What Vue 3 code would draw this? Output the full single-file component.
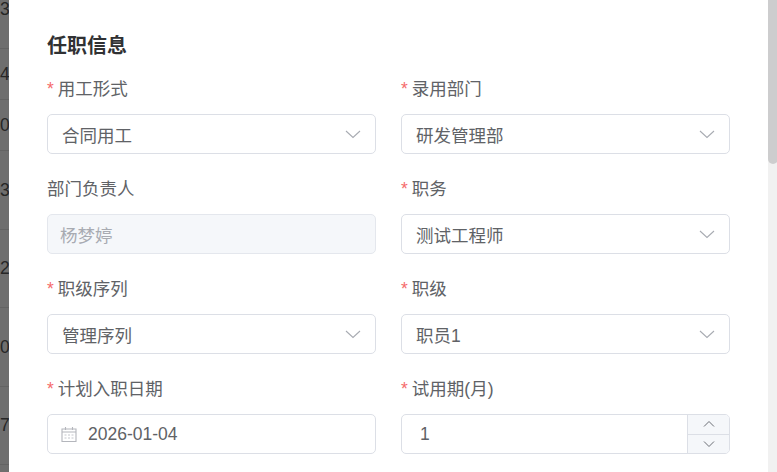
<template>
  <div class="page">
    <div class="backdrop">
      <div v-for="(row, i) in bgRows" :key="i" class="bg-row" :style="{ height: row.h + 'px' }">{{ row.n }}</div>
    </div>
    <main class="drawer">
      <section class="content">
        <h3 class="title">任职信息</h3>
        <div class="form">
          <div v-for="f in fields" :key="f.label" class="item">
            <label class="label"><span v-if="f.required" class="star">*</span>{{ f.label }}</label>
            <div v-if="f.type === 'select'" class="box">
              <span class="value">{{ f.value }}</span>
              <svg class="arrow" width="16" height="16" viewBox="0 0 16 16"><path d="M1 5 L8 11.5 L15 5" fill="none" stroke="#a8abb2" stroke-width="1.1" /></svg>
            </div>
            <div v-else-if="f.type === 'disabled'" class="box disabled">
              <span class="value">{{ f.value }}</span>
            </div>
            <div v-else-if="f.type === 'date'" class="box date">
              <svg class="cal" width="16" height="16" viewBox="0 0 16 16">
                <path d="M1 3 H15 V15.5 H1 Z" fill="none" stroke="#b4b6bc" stroke-width="1.1" />
                <path d="M1 6 H15 M4.5 1 V4 M11.5 1 V4" fill="none" stroke="#b4b6bc" stroke-width="1.1" />
                <path d="M3.5 9 H5.5 M7 9 H9 M10.5 9 H12.5 M3.5 12 H5.5 M7 12 H9 M10.5 12 H12.5" stroke="#c4c6cc" stroke-width="1" />
              </svg>
              <span class="value">{{ f.value }}</span>
            </div>
            <div v-else class="box number">
              <span class="value">{{ f.value }}</span>
              <div class="steps">
                <div class="step"><svg width="12" height="8" viewBox="0 0 12 8"><path d="M1 6.5 L6 1.5 L11 6.5" fill="none" stroke="#6b6e75" stroke-width="1" /></svg></div>
                <div class="step"><svg width="12" height="8" viewBox="0 0 12 8"><path d="M1 1.5 L6 6.5 L11 1.5" fill="none" stroke="#6b6e75" stroke-width="1" /></svg></div>
              </div>
            </div>
          </div>
        </div>
      </section>
      <div class="scrollbar"><div class="thumb"></div></div>
    </main>
  </div>
</template>

<script setup>
// Rows of the table behind the drawer, only their first digit shows
const bgRows = [
  { n: "3", h: 79 },
  { n: "4", h: 51 },
  { n: "0", h: 51 },
  { n: "3", h: 79 },
  { n: "2", h: 78 },
  { n: "0", h: 79 },
  { n: "7", h: 78 },
];

const fields = [
  { label: "用工形式", required: true, type: "select", value: "合同用工" },
  { label: "录用部门", required: true, type: "select", value: "研发管理部" },
  { label: "部门负责人", required: false, type: "disabled", value: "杨梦婷" },
  { label: "职务", required: true, type: "select", value: "测试工程师" },
  { label: "职级序列", required: true, type: "select", value: "管理序列" },
  { label: "职级", required: true, type: "select", value: "职员1" },
  { label: "计划入职日期", required: true, type: "date", value: "2026-01-04" },
  { label: "试用期(月)", required: true, type: "number", value: "1" },
];
</script>

<style>
html,
body {
  margin: 0;
  overflow: hidden;
}
</style>

<style scoped>
.page {
  display: flex;
  width: 777px;
  height: 472px;
  overflow: hidden;
  font-family: "Liberation Sans", "Noto Sans CJK SC", sans-serif;
}

.backdrop {
  width: 9px;
  flex-shrink: 0;
  overflow: hidden;
  background: #6e6e6e;
  margin-top: -30px;
}

.bg-row {
  box-sizing: border-box;
  border-bottom: 1px solid #636363;
  font-size: 17.5px;
  color: #262626;
  display: flex;
  align-items: center;
}

.drawer {
  flex: 1;
  display: flex;
  background: #fff;
}

.content {
  flex: 1;
  padding: 34px 38px 0;
}

.title {
  margin: 0 0 20px;
  font-size: 20px;
  line-height: 24px;
  font-weight: 700;
  color: #303133;
}

.form {
  display: grid;
  grid-template-columns: 329px 329px;
  column-gap: 25px;
  row-gap: 24px;
}

.label {
  display: block;
  height: 22px;
  line-height: 22px;
  margin-bottom: 14px;
  font-size: 17.5px;
  color: #606266;
}

.star {
  color: #f56c6c;
  margin-right: 4px;
}

.box {
  box-sizing: border-box;
  height: 40px;
  display: flex;
  align-items: center;
  padding: 0 14px;
  border: 1px solid #dcdfe6;
  border-radius: 5px;
  font-size: 17.5px;
  color: #606266;
  background: #fff;
}

.value {
  flex: 1;
}

.disabled {
  background: #f5f7fa;
  border-color: #e4e7ed;
  color: #a8abb2;
  padding-left: 12px;
}

.cal {
  margin-right: 11px;
  margin-left: -1px;
}

.number {
  padding-right: 0;
  padding-left: 18px;
}

.steps {
  width: 41px;
  height: 38px;
  display: flex;
  flex-direction: column;
  border-left: 1px solid #dcdfe6;
  background: #f5f7fa;
  border-radius: 0 4px 4px 0;
}

.step {
  flex: 1;
  display: flex;
  align-items: center;
  justify-content: center;
}

.step + .step {
  border-top: 1px solid #dcdfe6;
}

.scrollbar {
  width: 10px;
  background: #f1f1f1;
}

.thumb {
  height: 164px;
  background: #cdcdce;
  border-radius: 0 0 5px 5px;
}
</style>
